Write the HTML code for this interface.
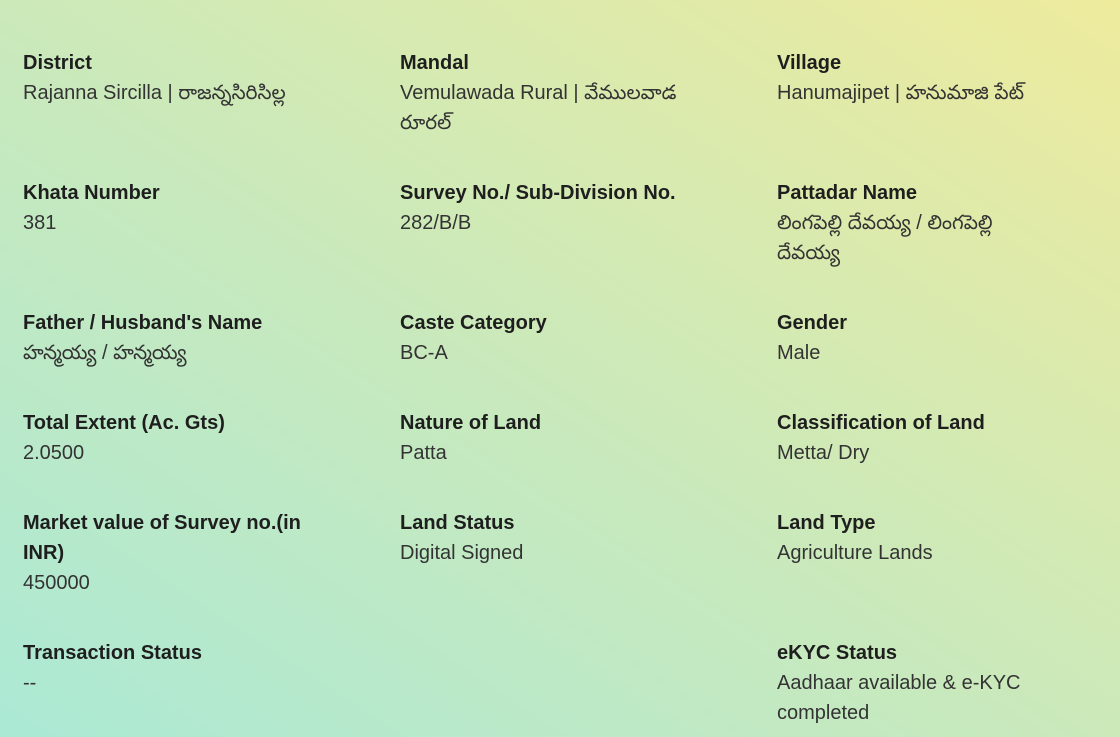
<!DOCTYPE html>
<html><head><meta charset="utf-8"><style>
html,body{margin:0;padding:0;width:1120px;height:737px;overflow:hidden;}
body{position:relative;
background:linear-gradient(to top right,#abe9d5 0%,#c8e9bd 45%,#eeeb9d 100%) fixed;
font-family:"Liberation Sans","Noto Sans CJK SC",sans-serif;color:#222;}
.grid{position:absolute;left:23px;top:48px;display:grid;grid-template-columns:377px 377px 330px;}
.c{width:340px;margin-bottom:40px;font-size:20px;line-height:30px;white-space:nowrap;}
.c.l{margin-bottom:0;}
.c b{display:block;font-weight:bold;color:#1e1e1e;}
.c span{color:#333;}
</style></head><body>
<div class="grid">
<div class="c"><b>District</b><span>Rajanna Sircilla | రాజన్నసిరిసిల్ల</span></div>
<div class="c"><b>Mandal</b><span>Vemulawada Rural | వేములవాడ<br>రూరల్</span></div>
<div class="c"><b>Village</b><span>Hanumajipet | హనుమాజి పేట్</span></div>
<div class="c"><b>Khata Number</b><span>381</span></div>
<div class="c"><b>Survey No./ Sub-Division No.</b><span>282/B/B</span></div>
<div class="c"><b>Pattadar Name</b><span>లింగపెల్లి దేవయ్య / లింగపెల్లి<br>దేవయ్య</span></div>
<div class="c"><b>Father / Husband's Name</b><span>హన్మయ్య / హన్మయ్య</span></div>
<div class="c"><b>Caste Category</b><span>BC-A</span></div>
<div class="c"><b>Gender</b><span>Male</span></div>
<div class="c"><b>Total Extent (Ac. Gts)</b><span>2.0500</span></div>
<div class="c"><b>Nature of Land</b><span>Patta</span></div>
<div class="c"><b>Classification of Land</b><span>Metta/ Dry</span></div>
<div class="c"><b>Market value of Survey no.(in<br>INR)</b><span>450000</span></div>
<div class="c"><b>Land Status</b><span>Digital Signed</span></div>
<div class="c"><b>Land Type</b><span>Agriculture Lands</span></div>
<div class="c l"><b>Transaction Status</b><span>--</span></div>
<div class="c l"></div>
<div class="c l"><b>eKYC Status</b><span>Aadhaar available &amp; e-KYC<br>completed</span></div>
</div>
</body></html>
